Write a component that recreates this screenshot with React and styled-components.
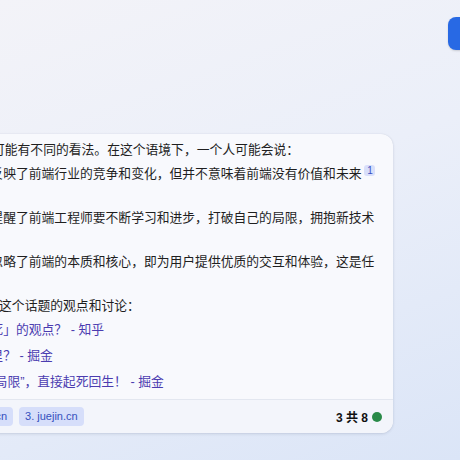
import React from 'react';
import styled, { createGlobalStyle } from 'styled-components';

const GlobalStyle = createGlobalStyle`
    html, body {
        margin:0;
        padding:0;
    }
    body {
        font-family:"Liberation Sans", "Noto Sans CJK SC", sans-serif;
    }
`;
const Page = styled.div`
    width:460px;
    height:460px;
    overflow:hidden;
    box-sizing:border-box;
    padding-top:17px;
    display:flex;
    flex-direction:column;
    background:linear-gradient(160deg, #f3f3f8 0%, #ebeff9 45%, #dbe5f7 100%);
`;
const TopBar = styled.div`
    height:33px;
    display:flex;
    justify-content:flex-end;
`;
const NewTopicButton = styled.button`
    width:80px;
    height:33px;
    margin-right:-68px;
    padding:0 0 0 20px;
    border:none;
    border-radius:8px;
    background:#2869e4;
    color:#fff;
    font-family:inherit;
    font-size:13px;
    text-align:left;
    box-shadow:0 1px 2px rgba(0,0,0,0.15);
`;
const Card = styled.div`
    flex-shrink:0;
    margin-top:84px;
    margin-left:-216px;
    width:609px;
    border-radius:12px;
    overflow:hidden;
    background:#f8f9fd;
    box-shadow:0 1px 3px rgba(30,40,80,0.14), 0 0 1px rgba(30,40,80,0.12);
`;
const Body = styled.div`
    padding:5px 16px 4px 16px;
    font-size:12.8px;
    line-height:22px;
    color:#1f1f1f;
`;
const Para = styled.p`
    margin:${p => p.$gap ? '0 0 2px 0' : '0'};
    white-space:nowrap;
`;
const List = styled.ul`
    margin:0;
    padding-left:24px;
    list-style:disc;
`;
const Item = styled.li`
    white-space:nowrap;
    line-height:${p => p.$tall ? '26px' : '22px'};
`;
const Link = styled.a`
    color:#4b3cb0;
    text-decoration:none;
`;
const Cite = styled.sup`
    display:inline-block;
    width:11px;
    height:11px;
    margin-left:3px;
    border-radius:3px;
    background:#d9dffa;
    color:#3a4fc2;
    font-size:10px;
    line-height:11px;
    text-align:center;
    vertical-align:4px;
`;
const Footer = styled.div`
    height:34px;
    box-sizing:border-box;
    border-top:1px solid #e3e7f0;
    background:#f3f5fb;
    display:flex;
    align-items:center;
    justify-content:space-between;
    padding:0 11px 0 6px;
`;
const Sources = styled.div`
    display:flex;
    align-items:center;
    gap:6px;
`;
const Label = styled.span`
    font-size:11px;
    color:#444;
    margin-right:3px;
`;
const SourceBadge = styled.span`
    height:19px;
    padding:0 6px;
    border-radius:4px;
    background:#d6defa;
    color:#3550bd;
    font-size:11px;
    line-height:19px;
`;
const Counter = styled.div`
    display:flex;
    align-items:center;
    gap:4px;
    font-size:12px;
    font-weight:bold;
    color:#111;
`;
const Dot = styled.span`
    width:10px;
    height:10px;
    border-radius:50%;
    background:#298a48;
`;

const sources = ['1. zhihu.com', '2. juejin.cn', '3. juejin.cn'];

const App = () => {
    return (
        <Page>
            <GlobalStyle />
            <TopBar>
                <NewTopicButton>新主题</NewTopicButton>
            </TopBar>
            <Card>
                <Body>
                    <Para $gap>对于前端已死这个说法，不同的人可能有不同的看法。在这个语境下，一个人可能会说：</Para>
                    <List>
                        <Item>前端已死是一种夸张的说法，反映了前端行业的竞争和变化，但并不意味着前端没有价值和未来<Cite>1</Cite><br />。</Item>
                        <Item>前端已死是一种激励的说法，提醒了前端工程师要不断学习和进步，打破自己的局限，拥抱新技术<br />和新思想。</Item>
                        <Item>前端已死是一种错误的说法，忽略了前端的本质和核心，即为用户提供优质的交互和体验，这是任<br />何技术都无法替代的。</Item>
                    </List>
                    <Para>如果你想了解更多, 以下是一些关于这个话题的观点和讨论：</Para>
                    <List>
                        <Item $tall><Link href="#">如何评价网友提出的「前端已死」的观点？ - 知乎</Link></Item>
                        <Item $tall><Link href="#">前端已死？前端人的出路在哪里？ - 掘金</Link></Item>
                        <Item $tall><Link href="#">前端已死？不，只要学会打破“局限”，直接起死回生！ - 掘金</Link></Item>
                    </List>
                </Body>
                <Footer>
                    <Sources>
                        <Label>了解详细信息:</Label>
                        {sources.map((s, i) => <SourceBadge key={i}>{s}</SourceBadge>)}
                    </Sources>
                    <Counter>3 共 8 <Dot /></Counter>
                </Footer>
            </Card>
        </Page>
    );
};

export default App;
